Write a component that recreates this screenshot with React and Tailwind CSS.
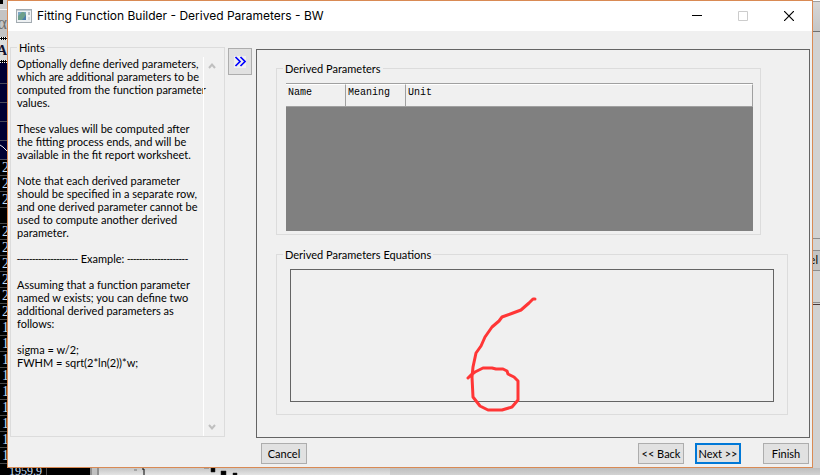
import React from "react";

const sheetRows = ["2", "2", "2", "", "2", "2", "2", "2", "2", "2", "1", "1", "1", "1", "1", "1", "1", "1", "1"];
const graphBands = [0, 1, 2, 3, 4];

const uiFont = "font-['Lato','Liberation_Sans',sans-serif]";
const pushButton =
  "flex h-[21px] w-[46px] items-center justify-center whitespace-nowrap border border-[#adadad] bg-[#e1e1e1] leading-[13px]";

function LeftBackdrop() {
  return (
    <div aria-hidden="true" className="flex w-[7px] shrink-0 flex-col overflow-hidden bg-black font-['Liberation_Serif',serif] text-[14px]">
      <div className="h-[9px] shrink-0 bg-[#cfcfcf]">
        <div className="h-[4px] w-[3px] bg-black" />
      </div>
      <div className="flex h-[28px] shrink-0 items-center justify-end border-t border-[#f4f4f4] bg-[#c4c4c4] text-[18px] text-[#707070]">α</div>
      <div className="h-[3px] shrink-0 border-y border-dotted border-white bg-black" />
      <div className="flex h-[20px] shrink-0 items-center justify-end bg-[#dcdcdc] font-bold text-[#10102c]">A</div>
      <div className="h-[3px] shrink-0 border-y border-dotted border-white bg-black" />
      <div className="relative shrink-0 bg-[#000033] pt-[2px]">
        {graphBands.map((b) => (
          <div key={b} className="h-[19px] border-b border-[#4a4a5c]" />
        ))}
        <svg className="absolute bottom-[8px] left-0 h-[8px] w-[7px]" viewBox="0 0 7 8">
          <path d="M0 1 L3 3 L7 7" fill="none" stroke="#e8e8f0" />
        </svg>
      </div>
      {sheetRows.map((digit, i) => (
        <div key={i} className="flex h-[16px] shrink-0 items-end border-b border-[#4a4a4a] pl-[2px] leading-[14px] text-[#c4dcf4]">
          {digit}
        </div>
      ))}
    </div>
  );
}

function RightBackdrop() {
  return (
    <div aria-hidden="true" className={`flex w-[7px] shrink-0 flex-col overflow-hidden bg-[#d2d2d2] text-black ${uiFont}`}>
      <div className="h-[32px] shrink-0 border-b border-[#707070] bg-gradient-to-b from-[#d8d8d8] to-[#c6c6c6]">
        <div className="h-[2px] border-b border-[#a0a0a0] bg-white" />
      </div>
      <div className="h-[207px] shrink-0 border-b border-[#8c8c8c]" />
      <div className="h-[11px] shrink-0" />
      <div className="flex h-[21px] shrink-0 items-center justify-end border-y border-[#8c8c8c] bg-[#c4c4c4] pr-[2px]">el</div>
      <div className="h-[32px] shrink-0 border-b border-[#8c8c8c]" />
      <div className="h-[2px] shrink-0 border-b border-[#4c3838]" />
    </div>
  );
}

function BottomBackdrop() {
  return (
    <div aria-hidden="true" className="flex h-[7px] shrink-0 overflow-hidden bg-[#cacaca]">
      <div className="flex w-[47px] shrink-0 items-center border-r border-[#4a4a4a] bg-black pl-[9px] font-['Liberation_Serif',serif] text-[12px] leading-[7px] text-[#c4dcf4]">
        1959.9
      </div>
      <div className="w-[43px] shrink-0 bg-black" />
      <div className="w-[9px] shrink-0 border-x-2 border-[#909090] bg-[#c0c0c0]" />
      <div className="w-[291px] bg-gradient-to-b from-[#c6c6c6] to-[#e4e4e4]">
        <svg className="h-[7px] w-[160px]" viewBox="0 0 160 7">
          <path d="M35 2 H38 M105 0 H110 M112 0 H116 V4 H112 Z M122 3 H127 V7 H122 Z M134 5 H138 V7 H134 Z" fill="#000" stroke="#222" strokeWidth="0.5" />
          <path d="M43 1 H45 V7" fill="none" stroke="#000" />
        </svg>
      </div>
      <div className="flex-1 bg-gradient-to-b from-[#bebebe] to-[#d2d2d2]" />
    </div>
  );
}

function TitleBar() {
  return (
    <header className="flex h-[30px] shrink-0 items-center bg-white pl-[8px]">
      <svg className="h-[14px] w-[16px] shrink-0" viewBox="0 0 16 14">
        <rect x="0.5" y="0.5" width="15" height="13" fill="#eef1f3" stroke="#a3abb1" />
        <rect x="1" y="1" width="14" height="1" fill="#c3cbd0" />
        <rect x="2" y="3" width="8" height="8" fill="#7ba6c4" />
        <path d="M2 11 V7 L6 3 H8 L10 6 V11 Z" fill="#6d9f8b" />
        <path d="M6 11 L10 6 V11 Z" fill="#4a7cac" />
        <rect x="12" y="3" width="2" height="3" fill="#b4bcc2" />
        <rect x="12" y="8" width="2" height="3" fill="#d4d9dc" />
      </svg>
      <h1 className="flex-1 whitespace-nowrap pl-[5px] font-['Inter','Noto_Sans',sans-serif] text-[12px] leading-[16px] text-black">
        Fitting Function Builder - Derived Parameters - BW
      </h1>
      <button type="button" aria-label="Minimize" className="flex h-full w-[46px] items-center justify-center">
        <svg className="h-[10px] w-[10px]" viewBox="0 0 10 10"><path d="M0 4.5 H10" stroke="#000" /></svg>
      </button>
      <button type="button" aria-label="Maximize" disabled className="flex h-full w-[46px] items-center justify-center">
        <svg className="h-[10px] w-[10px]" viewBox="0 0 10 10"><path d="M0.5 0.5 H9.5 V9.5 H0.5 Z" fill="none" stroke="#cccccc" /></svg>
      </button>
      <button type="button" aria-label="Close" className="flex h-full w-[46px] items-center justify-center">
        <svg className="h-[10px] w-[10px]" viewBox="0 0 10 10"><path d="M0 0 L10 10 M10 0 L0 10" stroke="#000" strokeWidth="1.2" /></svg>
      </button>
    </header>
  );
}

function Rule() {
  return <span className="font-['Roboto',sans-serif] leading-none">--------------------</span>;
}

function Hints() {
  return (
    <fieldset className="flex w-[215px] min-w-0 shrink-0 flex-col border border-[#dcdcdc] pl-[6px]">
      <legend className="px-[2px] leading-[13px]">Hints</legend>
      <div className="flex h-full pt-[3px]">
        <p className="min-w-0 flex-1 whitespace-pre leading-[13px]">
          {`Optionally define derived parameters,
which are additional parameters to be
computed from the function parameter
values.

These values will be computed after
the fitting process ends, and will be
available in the fit report worksheet.

Note that each derived parameter
should be specified in a separate row,
and one derived parameter cannot be
used to compute another derived
parameter.

`}
          <Rule /> Example: <Rule />
          {`

Assuming that a function parameter
named w exists; you can define two
additional derived parameters as
follows:

sigma = w/2;
FWHM = sqrt(2*ln(2))*w;`}
        </p>
        <div className="flex w-[21px] shrink-0 flex-col items-center justify-between border-l border-white py-[5px] pr-[5px]">
          <svg className="h-[8px] w-[8px]" viewBox="0 0 8 8"><path d="M1 6 L4 2.5 L7 6" fill="none" stroke="#bfbfbf" strokeWidth="2" /></svg>
          <svg className="h-[8px] w-[8px]" viewBox="0 0 8 8"><path d="M1 2 L4 5.5 L7 2" fill="none" stroke="#bfbfbf" strokeWidth="2" /></svg>
        </div>
      </div>
    </fieldset>
  );
}

function ParameterTable() {
  const head = "border-r border-r-[#a0a0a0] border-t border-t-white pl-[2px] pt-[2px] text-left align-top font-normal";
  return (
    <fieldset className="mr-[27px] min-w-0 border border-[#dcdcdc] px-[6px] pb-[3px]">
      <legend className="px-[2px] leading-[13px]">Derived Parameters</legend>
      <div className="pl-[3px] pr-[1px] pt-[8px]">
        <div className="h-[148px] bg-[#808080]">
          <table className="h-[24px] w-full table-fixed border-separate border-spacing-0 border-y border-[#a0a0a0] bg-[#f0f0f0] font-['Liberation_Mono',monospace] text-[10px] leading-[12px]">
            <thead>
              <tr>
                <th scope="col" className={`w-[60px] ${head}`}>Name</th>
                <th scope="col" className={`w-[60px] ${head}`}>Meaning</th>
                <th scope="col" className={head}>Unit</th>
              </tr>
            </thead>
          </table>
        </div>
      </div>
    </fieldset>
  );
}

function Equations() {
  return (
    <fieldset className="mt-[13px] flex min-w-0 flex-1 flex-col border border-[#dcdcdc] px-[6px] pb-[12px]">
      <legend className="px-[2px] leading-[13px]">
        <label htmlFor="equations">Derived Parameters Equations</label>
      </legend>
      <div className="h-full px-[7px] pt-[8px]">
        <div className="relative h-full">
          <textarea id="equations" className="block h-full w-full resize-none border border-[#646464] bg-[#f0f0f0] p-[2px] outline-none" />
          <svg className="pointer-events-none absolute left-[175px] top-[27px] h-[118px] w-[76px]" viewBox="0 0 76 118">
            <path
              d="M70 3 L68 3 L64 7 L56 14 L48 17 L37 21 L34 25 L27 31 L20 41 L16 50 L11 57 L8 71 L7 81 L8 101 L15 110 L23 114 H37 L47 111 L53 104 V85 L49 81 L43 78 L42 75 L38 73 H31 L27 72 H18 L10 76 L6 79 L3 82"
              fill="none"
              stroke="#ff3636"
              strokeWidth="3"
              strokeLinecap="round"
              strokeLinejoin="round"
            />
          </svg>
        </div>
      </div>
    </fieldset>
  );
}

export default function App() {
  return (
    <div className={`flex h-screen flex-col overflow-hidden text-[11px] text-black ${uiFont}`}>
      <div className="flex min-h-0 flex-1">
        <LeftBackdrop />
        <main className="flex min-w-0 flex-1 flex-col border border-[#d98a54] bg-[#f0f0f0]">
          <TitleBar />
          <div className="flex min-h-0 flex-1 px-[2px] pt-[10px]">
            <div className="flex pb-px">
              <Hints />
            </div>
            <button
              type="button"
              aria-label="Collapse hints"
              className="ml-[3px] mt-[7px] flex h-[27px] w-[24px] shrink-0 items-center justify-center border border-[#adadad] bg-[#e1e1e1]"
            >
              <svg className="h-[12px] w-[12px] bg-[#f0f0f0]" viewBox="0 0 12 12">
                <path d="M1.5 1 L6 5.5 L1.5 10 M6.5 1 L11 5.5 L6.5 10" fill="none" stroke="#0000ff" strokeWidth="1.7" />
              </svg>
            </button>
            <section className="ml-[4px] mt-[8px] flex min-w-0 flex-1 flex-col border border-[#646464] pb-[22px] pl-[19px] pr-[21px] pt-[12px]">
              <ParameterTable />
              <Equations />
            </section>
          </div>
          <footer className="flex shrink-0 pb-[3px] pl-[253px] pr-[3px] pt-[5px]">
            <button type="button" className={pushButton}>Cancel</button>
            <button type="button" className={`ml-auto ${pushButton}`}>&lt;&lt; Back</button>
            <button
              type="button"
              className="ml-[11px] flex h-[21px] w-[46px] items-center justify-center whitespace-nowrap border-2 border-[#0078d7] bg-[#e1e1e1] leading-[13px]"
            >
              Next &gt;&gt;
            </button>
            <button type="button" className={`ml-[22px] ${pushButton}`}>Finish</button>
          </footer>
        </main>
        <RightBackdrop />
      </div>
      <BottomBackdrop />
    </div>
  );
}
